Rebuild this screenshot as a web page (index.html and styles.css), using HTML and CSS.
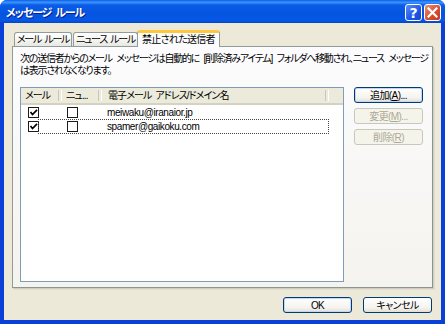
FILE: index.html
```html
<!DOCTYPE html>
<html lang="ja">
<head>
    <meta charset="UTF-8">
    <title>メッセージ ルール</title>
    <link rel="stylesheet" href="styles.css">
</head>
<body>
    <div class="window">
        <div class="titlebar">
            <span class="title">メッセージ ルール</span>
            <div class="caption-buttons">
                <span class="cap help">?</span>
                <span class="cap close">
                    <svg width="11" height="11" viewBox="0 0 11 11"><path d="M1.5 1.5 L9.5 9.5 M9.5 1.5 L1.5 9.5" stroke="#fff" stroke-width="2.2" stroke-linecap="square"/></svg>
                </span>
            </div>
        </div>
        <div class="client">
            <div class="tabs">
                <div class="tab t1">メール ルール</div>
                <div class="tab t2">ニュース ルール</div>
                <div class="tab t3 active">禁止された送信者</div>
            </div>
            <div class="panel">
                <p class="info">次の送信者からのメール メッセージは自動的に [削除済みアイテム] フォルダへ移動され、ニュース メッセージ<br>は表示されなくなります。</p>
                <div class="body-row">
                    <div class="listbox">
                        <div class="header">
                            <div class="col c1">メール</div>
                            <div class="col c2">ニュ...</div>
                            <div class="col c3">電子メール アドレス/ドメイン名</div>
                            <div class="col c4"></div>
                        </div>
                        <div class="row">
                            <div class="cell c1"><span class="check on"></span></div>
                            <div class="cell c2"><span class="check"></span></div>
                            <div class="cell c3">meiwaku@iranaior.jp</div>
                        </div>
                        <div class="row focus">
                            <div class="cell c1"><span class="check on"></span></div>
                            <div class="cell c2"><span class="check"></span></div>
                            <div class="cell c3">spamer@gaikoku.com</div>
                        </div>
                    </div>
                    <div class="side-buttons">
                        <button class="btn default">追加(<u>A</u>)...</button>
                        <button class="btn" disabled>変更(<u>M</u>)...</button>
                        <button class="btn" disabled>削除(<u>R</u>)</button>
                    </div>
                </div>
            </div>
            <div class="footer">
                <button class="btn default">OK</button>
                <button class="btn">キャンセル</button>
            </div>
        </div>
    </div>
</body>
</html>
```

FILE: styles.css
```css
* {
    margin: 0;
    padding: 0;
    box-sizing: border-box;
}

body {
    width: 445px;
    height: 324px;
    overflow: hidden;
    font-family: "Liberation Sans", "Noto Sans CJK JP", sans-serif;
    font-size: 10px;
    font-feature-settings: "palt";
    color: #000;
}

.window {
    width: 445px;
    height: 324px;
    display: flex;
    flex-direction: column;
    background: #0a3fd8;
    border-radius: 7px 7px 0 0;
    overflow: hidden;
}

.titlebar {
    height: 23px;
    display: flex;
    align-items: center;
    justify-content: space-between;
    padding: 0 4px 0 6px;
    background: linear-gradient(#0a5fe8 0%, #3d95ff 10%, #0a5ce6 22%, #0454e0 60%, #0658e8 88%, #0545c8 100%);
}

.title {
    color: #fff;
    font-weight: bold;
    font-size: 11px;
    letter-spacing: -1.1px;
    word-spacing: 2px;
    text-shadow: 1px 1px 0 #0a1e8c;
}

.caption-buttons {
    display: flex;
    gap: 2px;
    margin-top: 2px;
}

.cap {
    width: 17px;
    height: 17px;
    border: 1px solid #fff;
    border-radius: 3px;
    display: flex;
    align-items: center;
    justify-content: center;
    color: #fff;
    font: bold 14px "DejaVu Sans", sans-serif;
}

.help {
    background: linear-gradient(135deg, #5a8ef8, #1e55e6 60%, #1846c8);
}

.close {
    background: linear-gradient(135deg, #e9917a, #d9502f 55%, #c13a1a);
}

.client {
    flex: 1;
    margin: 0 4px 4px 4px;
    background: #ece9d8;
    display: flex;
    flex-direction: column;
    padding: 7px 8px 7px 8px;
}

.tabs {
    display: flex;
    align-items: flex-end;
    height: 16px;
    padding-left: 2px;
    position: relative;
    z-index: 1;
}

.tab {
    height: 14px;
    border: 1px solid #919b9c;
    border-bottom: none;
    border-radius: 3px 3px 0 0;
    background: linear-gradient(#fff, #f3f3ef 60%, #e8e7e1);
    line-height: 13px;
    margin-right: 1px;
    letter-spacing: -1.3px;
    word-spacing: 2px;
    white-space: nowrap;
    text-align: center;
    overflow: hidden;
}

.t1 { width: 58px; }
.t2 { width: 65px; }
.t3 { width: 83px; }

.tab.active {
    height: 17px;
    margin-bottom: -1px;
    background: #fcfcfe;
    border-top: 3px solid #ffc83c;
    line-height: 13px;
    margin-left: -2px;
    letter-spacing: -0.7px;
}

.panel {
    height: 242px;
    border: 1px solid #919b9c;
    border-right-color: #8c9596;
    border-bottom-color: #8c9596;
    box-shadow: 1px 1px 0 #d0cec0, 2px 2px 0 #e2dfd0;
    background: linear-gradient(#fcfcfe, #f4f3ee);
    padding: 6px 8px 5px 7px;
    display: flex;
    flex-direction: column;
}

.info {
    line-height: 12px;
    letter-spacing: -1.25px;
    word-spacing: 3px;
    white-space: nowrap;
    height: 34px;
}

.body-row {
    flex: 1;
    display: flex;
    gap: 10px;
}

.listbox {
    width: 324px;
    border: 1px solid #7f9db9;
    background: #fff;
}

.header {
    display: flex;
    height: 17px;
    background: #ebeadb;
    border-bottom: 2px solid #d6d2c2;
    align-items: center;
}

.col {
    height: 15px;
    line-height: 15px;
    padding-left: 4px;
    letter-spacing: -0.9px;
    word-spacing: 2px;
    position: relative;
    white-space: nowrap;
}

.col::after {
    content: "";
    position: absolute;
    right: 0;
    top: 2px;
    width: 2px;
    height: 11px;
    border-left: 1px solid #cbc7b8;
    border-right: 1px solid #fff;
}

.c1 { width: 41px; }
.c2 { width: 40px; }
.c3 { width: 227px; }
.c4 { flex: 1; }
.c4::after { display: none; }

.c3.col { padding-left: 6px; }

.row {
    display: flex;
    height: 14px;
    align-items: center;
}

.cell {
    height: 14px;
    display: flex;
    align-items: center;
}

.row .c1 { padding-left: 7px; }
.row .c2 { padding-left: 5px; }
.row .c3 { padding-left: 5px; letter-spacing: -0.4px; }

.row.focus {
    position: relative;
}

.row.focus::after {
    content: "";
    position: absolute;
    left: 17px;
    right: 14px;
    top: 0;
    bottom: -1px;
    border: 1px dotted #444;
}

.check {
    width: 11px;
    height: 11px;
    border: 1px solid #1c1c1c;
    background: #fff;
    display: block;
}

.check.on {
    background: #fff url("data:image/svg+xml,%3Csvg xmlns='http://www.w3.org/2000/svg' width='9' height='9'%3E%3Cpath d='M1.5 4 L3.5 6.5 L8 1.8' fill='none' stroke='%23000' stroke-width='1.7'/%3E%3C/svg%3E") no-repeat center;
}

.side-buttons {
    display: flex;
    flex-direction: column;
    gap: 5px;
}

.btn {
    width: 69px;
    height: 16px;
    border: 1px solid #003c74;
    border-radius: 3px;
    background: linear-gradient(#fff, #f4f3ee 70%, #e3e0d2);
    font-family: "Liberation Sans", "Noto Sans CJK JP", sans-serif;
    font-size: 10px;
    font-feature-settings: "palt";
    letter-spacing: -0.6px;
    line-height: 13px;
    color: #000;
}

.btn.default {
    box-shadow: inset 0 0 0 1px #c6d5f5;
}

.btn:disabled {
    border-color: #c9c7ba;
    background: #f5f4ea;
    color: #aca899;
}

.footer {
    flex: 1;
    display: flex;
    justify-content: flex-end;
    align-items: flex-end;
    gap: 11px;
    padding-right: 1px;
}
```
